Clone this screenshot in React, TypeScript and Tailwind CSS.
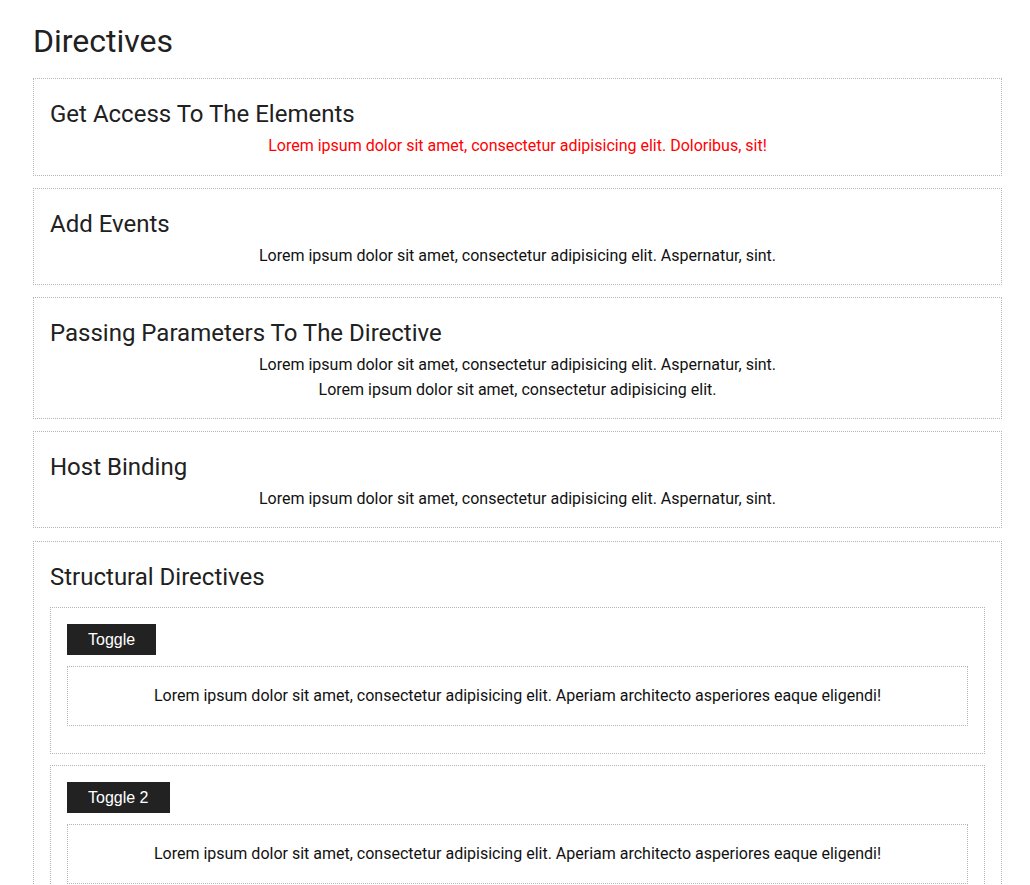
const lorem = "Lorem ipsum dolor sit amet, consectetur adipisicing elit. Aspernatur, sint.";
const longLorem =
  "Lorem ipsum dolor sit amet, consectetur adipisicing elit. Aperiam architecto asperiores eaque eligendi!";

const Card = ({
  title,
  className = "mb-3 pb-4",
  children,
}: {
  title: string;
  className?: string;
  children?: React.ReactNode;
}) => (
  <div className={`border border-dotted border-[#b5b5b5] px-4 pt-4 ${className}`}>
    <h2 className="text-2xl leading-[38px] text-[#212121]">{title}</h2>
    {children}
  </div>
);

const ToggleBlock = ({ label }: { label: string }) => (
  <div className="mb-[11px] border border-dotted border-[#b5b5b5] px-4 pt-4 pb-[27px]">
    <button
      className="h-[31px] bg-[#222] px-[21px] text-white text-base"
      style={{ fontFamily: '"Liberation Sans", Arial, sans-serif' }}
    >
      {label}
    </button>
    <div className="mt-[11px] border border-dotted border-[#b5b5b5] py-4 text-center leading-[26px]">
      {longLorem}
    </div>
  </div>
);

export default function App() {
  return (
    <div
      className="min-h-screen bg-white pt-[22px] text-[#111] text-base"
      style={{ fontFamily: "Roboto, 'Noto Sans', sans-serif" }}
    >
      <div className="ml-[33px] w-[969px]">
        <h1 className="mb-[18px] text-[32px] leading-[38px] text-[#212121]">Directives</h1>

        <Card title="Get Access To The Elements" className="mb-3 pb-[17px]">
          <p className="text-center leading-[25px] text-[#ff0000]">
            Lorem ipsum dolor sit amet, consectetur adipisicing elit. Doloribus, sit!
          </p>
        </Card>

        <Card title="Add Events">
          <p className="text-center leading-[25px]">{lorem}</p>
        </Card>

        <Card title="Passing Parameters To The Directive">
          <p className="text-center leading-[25px]">{lorem}</p>
          <p className="text-center leading-[25px]">
            Lorem ipsum dolor sit amet, consectetur adipisicing elit.
          </p>
        </Card>

        <Card title="Host Binding" className="mb-[13px] pb-4">
          <p className="text-center leading-[25px]">{lorem}</p>
        </Card>

        <div className="mb-3 border border-dotted border-[#b5b5b5] px-4 pt-4 pb-4">
          <h2 className="mb-[11px] text-2xl leading-[38px] text-[#212121]">Structural Directives</h2>
          <ToggleBlock label="Toggle" />
          <ToggleBlock label="Toggle 2" />
        </div>
      </div>
    </div>
  );
}
